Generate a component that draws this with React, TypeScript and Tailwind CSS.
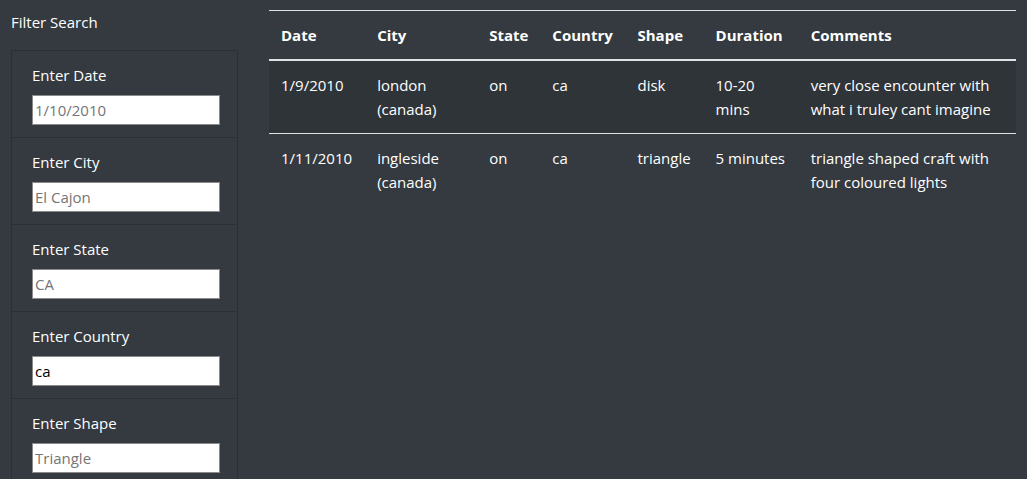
import React from "react";

const fields = [
  { label: "Enter Date", placeholder: "1/10/2010" },
  { label: "Enter City", placeholder: "El Cajon" },
  { label: "Enter State", placeholder: "CA" },
  { label: "Enter Country", placeholder: "", value: "ca" },
  { label: "Enter Shape", placeholder: "Triangle" },
];

const rows = [
  ["1/9/2010", "london (canada)", "on", "ca", "disk", "10-20 mins", "very close encounter with what i truley cant imagine"],
  ["1/11/2010", "ingleside (canada)", "on", "ca", "triangle", "5 minutes", "triangle shaped craft with four coloured lights"],
];

const heads = ["Date", "City", "State", "Country", "Shape", "Duration", "Comments"];
const widths = ["w-[96px]", "w-[112px]", "w-[63px]", "w-[85px]", "w-[78px]", "w-[95px]", "w-[217px]"];

export default function App() {
  return (
    <div
      className="w-[1027px] h-[479px] overflow-hidden bg-[#343a40] text-white flex text-[15px] leading-[24px]"
      style={{ fontFamily: '"Segoe UI", "Open Sans", sans-serif' }}
    >
      <div className="w-[238px] pl-[11px] pt-[10px] shrink-0">
        <div className="mb-[16px]">Filter Search</div>
        <ul className="border border-[#2c3035] border-b-0 w-[227px]">
          {fields.map((f) => (
            <li key={f.label} className="px-[20px] pt-[12px] pb-[12px] border-b border-[#2c3035]">
              <label className="block mb-[8px]">{f.label}</label>
              <input
                className="w-[188px] h-[30px] bg-white text-black border border-[#8a8a8a] px-[2px] placeholder:text-[#757575] outline-none"
                placeholder={f.placeholder}
                defaultValue={f.value}
              />
            </li>
          ))}
        </ul>
      </div>
      <div className="pl-[31px] pt-[10px]">
        <table className="table-fixed border-collapse w-[747px]">
          <thead>
            <tr className="border-t border-[#dee2e6]">
              {heads.map((h, i) => (
                <th key={h} className={`${widths[i]} text-left font-bold px-[12px] py-[12px] border-b-2 border-[#dee2e6] align-bottom`}>
                  {h}
                </th>
              ))}
            </tr>
          </thead>
          <tbody>
            {rows.map((r, ri) => (
              <tr key={ri} className={ri === 0 ? "bg-[#2f3439] border-b border-[#dee2e6]" : ""}>
                {r.map((c, ci) => (
                  <td key={ci} className="px-[12px] py-[12px] align-top">
                    {c}
                  </td>
                ))}
              </tr>
            ))}
          </tbody>
        </table>
      </div>
    </div>
  );
}
